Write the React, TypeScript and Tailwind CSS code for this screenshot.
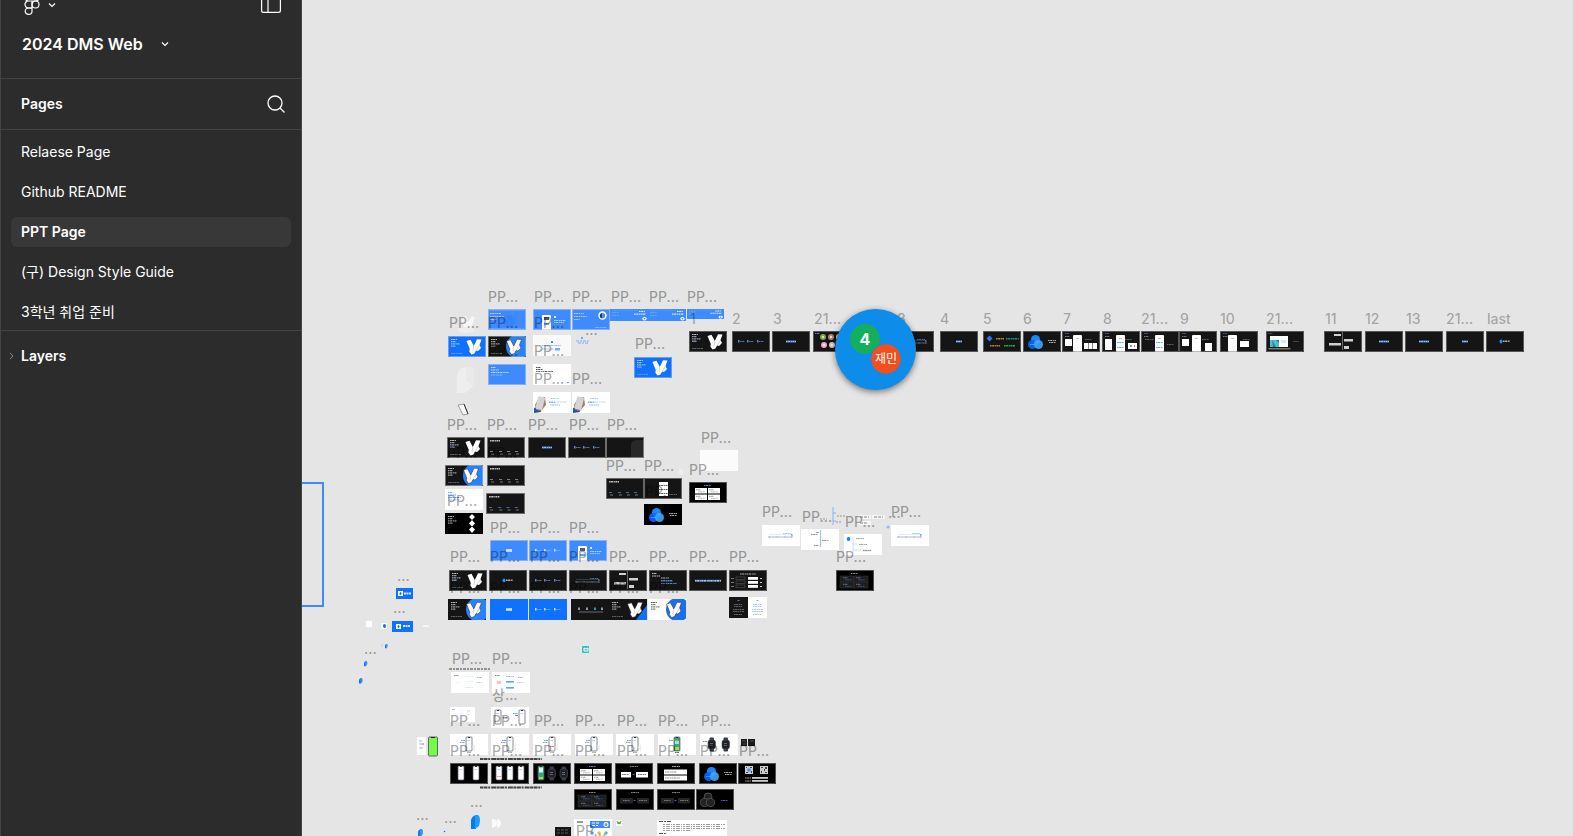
import React from "react";

type Kind =
  | "plain" | "logo" | "logoCircle" | "text" | "title" | "letters" | "phone" | "ring" | "corner" | "content"
  | "caption" | "hand" | "avatars" | "brands" | "trefoil" | "screens" | "laptop" | "branch" | "brand"
  | "fade" | "sheet" | "cards" | "pair" | "wide" | "diamonds" | "axis" | "vaxis" | "steps" | "notes"
  | "device" | "colorDevice" | "devices" | "watches" | "deviceWatches" | "outlineTrefoil" | "qr" | "split"
  | "twoPhones" | "board" | "dots" | "pills";

type Frame = { x: number; y: number; w?: number; h?: number; bg: string; kind: Kind; edge?: string; v?: number };
type Label = { x: number; y: number; text: string; light?: boolean };

const SKY = "#3d8bff";
const BLUE = "#1071ff";
const INK = "#151515";
const BLACK = "#000000";
const WHITE = "#ffffff";
const EDGE = "#8a8a8a";

const row = (y: number, xs: number[], bg: string, kinds: Kind[], edge?: string): Frame[] =>
  xs.map((x, i) => ({ x, y, bg, kind: kinds[i], edge, v: i }));

const frames: Frame[] = [
  ...row(309, [488, 533, 572], SKY, ["content", "phone", "ring"], "#c3cfe2"),
  { x: 610, y: 309, h: 12, bg: SKY, kind: "corner" },
  { x: 648, y: 309, h: 12, bg: SKY, kind: "corner" },
  { x: 687, y: 309, w: 37, h: 10, bg: SKY, kind: "corner" },
  { x: 448, y: 336, bg: BLUE, kind: "logo", edge: "#aebfdd" },
  { x: 488, y: 336, bg: INK, kind: "logoCircle", edge: "#aaaaaa" },
  { x: 533, y: 335, bg: "#f9f9f9", kind: "caption" },
  { x: 488, y: 364, bg: SKY, kind: "text", edge: "#c3cfe2" },
  { x: 533, y: 364, bg: WHITE, kind: "notes" },
  { x: 634, y: 357, bg: BLUE, kind: "logo", edge: "#aebfdd" },
  { x: 533, y: 392, bg: WHITE, kind: "hand" },
  { x: 572, y: 392, bg: WHITE, kind: "hand" },
  ...row(331, [689, 732, 772, 813, 854, 896, 940, 983, 1023, 1062, 1102, 1141, 1179, 1220, 1266, 1324, 1365, 1405, 1446, 1486], INK,
    ["logo", "letters", "title", "avatars", "title", "axis", "title", "brands", "trefoil", "screens", "screens", "screens", "screens", "screens", "laptop", "branch", "title", "title", "title", "brand"], EDGE),
  ...row(437, [447, 487, 528, 568, 606], INK, ["logo", "dots", "title", "letters", "fade"], "#b5b5b5"),
  ...row(465, [445, 487], INK, ["logoCircle", "dots"], "#b5b5b5"),
  { x: 445, y: 489, bg: WHITE, kind: "text", v: 1 },
  { x: 486, y: 493, w: 39, bg: INK, kind: "dots", edge: "#b5b5b5" },
  { x: 445, y: 513, bg: BLACK, kind: "diamonds" },
  ...row(478, [606, 644], INK, ["dots", "sheet"], "#a5a5a5"),
  { x: 700, y: 450, bg: "#fbfbfb", kind: "plain" },
  { x: 689, y: 482, bg: BLACK, kind: "cards", edge: EDGE },
  { x: 644, y: 504, bg: BLACK, kind: "trefoil" },
  ...row(540, [490, 529, 569], SKY, ["title", "letters", "phone"], "#c3cfe2"),
  ...row(570, [449, 489, 529, 569, 609, 649, 689, 729], INK, ["logo", "brand", "letters", "axis", "branch", "text", "wide", "pills"], EDGE),
  { x: 448, y: 599, bg: INK, kind: "logoCircle" },
  { x: 490, y: 599, bg: BLUE, kind: "title" },
  { x: 529, y: 599, bg: BLUE, kind: "letters" },
  { x: 571, y: 599, bg: INK, kind: "steps" },
  { x: 609, y: 599, bg: INK, kind: "logoCircle", v: 2 },
  { x: 648, y: 599, bg: WHITE, kind: "logoCircle", v: 1 },
  { x: 729, y: 597, bg: WHITE, kind: "split" },
  ...row(525, [762, 891], WHITE, ["axis", "axis"]),
  { x: 801, y: 529, bg: WHITE, kind: "vaxis" },
  { x: 844, y: 534, bg: WHITE, kind: "vaxis", v: 1 },
  { x: 836, y: 570, bg: BLACK, kind: "cards", v: 9, edge: EDGE },
  ...row(672, [451, 492], WHITE, ["board", "board"]),
  { x: 450, y: 707, w: 25, h: 15, bg: WHITE, kind: "board" },
  { x: 491, y: 707, bg: WHITE, kind: "twoPhones" },
  ...row(734, [450, 491, 533, 575, 616, 658, 700], WHITE, ["device", "device", "device", "device", "device", "colorDevice", "watches"]),
  ...row(763, [450, 491, 533, 574, 615, 657, 699, 738], BLACK, ["devices", "devices", "deviceWatches", "cards", "pair", "wide", "trefoil", "qr"], EDGE),
  ...row(789, [574, 616, 657, 696], BLACK, ["cards", "pair", "pair", "outlineTrefoil"], EDGE).map((f) => ({ ...f, v: 9 })),
];

const pp = (y: number, xs: number[]): Label[] => xs.map((x) => ({ x, y, text: "PP..." }));
const numbered: [number, string][] = [
  [690, "1"], [732, "2"], [773, "3"], [814, "21..."], [897, "3"], [940, "4"], [983, "5"], [1023, "6"], [1063, "7"],
  [1103, "8"], [1141, "21..."], [1180, "9"], [1220, "10"], [1266, "21..."], [1325, "11"], [1365, "12"], [1406, "13"],
  [1446, "21..."], [1487, "last"],
];
const labels: Label[] = [
  ...pp(296, [488, 534, 572, 611, 649, 687]),
  ...pp(322, [449, 488, 534]),
  ...pp(350, [488, 534]),
  ...pp(343, [635]),
  ...pp(378, [534, 572]),
  ...numbered.map(([x, text]) => ({ x, y: 318, text, light: true })),
  ...pp(424, [447, 487, 528, 569, 607]),
  ...pp(452, [447, 487]),
  ...pp(465, [606, 644]),
  ...pp(437, [701]),
  ...pp(469, [689]),
  ...pp(500, [447]),
  ...pp(491, [645]),
  ...pp(527, [490, 530, 569]),
  ...pp(556, [450, 490, 530, 569, 609, 649, 689, 729]),
  ...pp(587, [450, 490, 530, 569, 609, 649]),
  ...pp(511, [762, 891]),
  ...pp(516, [802]),
  ...pp(521, [845]),
  ...pp(556, [836]),
  ...pp(658, [452, 492]),
  { x: 492, y: 694, text: "상..." },
  ...pp(720, [450, 492, 534, 575, 617, 658, 701]),
  ...pp(750, [450, 492, 534, 575, 617, 658, 700, 739]),
  ...pp(830, [576]),
  ...[[585, 333], [397, 579], [393, 611], [364, 652], [470, 805], [416, 818], [444, 821], [888, 516]].map(([x, y]) => ({ x, y: y - 4, text: "..." })),
];

function Bar({ x, y, w, h = 1, c = "#d6d6d6", o = 0.8 }: { x: number; y: number; w: number; h?: number; c?: string; o?: number }) {
  const textLike = w >= 4 && h >= 1 && h <= 1.5;
  if (textLike) {
    return <path d={`M${x} ${y + h / 2}h${w}`} stroke={c} strokeWidth={h} strokeDasharray="1.6 .5 2.3 .7 1.1 .4" opacity={o} fill="none" />;
  }
  return <rect x={x} y={y} width={w} height={h} fill={c} opacity={o} />;
}

function Check({ dark }: { dark?: boolean }) {
  return (
    <g fill="#fff" stroke={dark ? "#262626" : "none"} strokeWidth=".5" strokeLinejoin="round">
      <path d="M18.500 5 22.500 3.800 25.800 10 29 3.200 33.500 3.500 31.500 9 33 12 30 15 28 14.500 26.500 17.500 23.500 18.500 21.300 15.500 21.800 13z" />
      <path d="m25.800 10-.8 5M31.500 9l-3 5" stroke="#999" strokeWidth=".4" />
    </g>
  );
}

function Para({ c = "#e8e8e8" }: { c?: string }) {
  return (
    <g>
      <Bar x={3} y={3} w={6} c={c} />
      <Bar x={3} y={5.2} w={5} c={c} />
      <Bar x={3} y={7.4} w={9} c={c} />
      <Bar x={3} y={9.6} w={5} c={c} />
    </g>
  );
}

function Trefoil() {
  return (
    <g>
      <circle cx="12.500" cy="8.500" r="4.500" fill="#1c86ff" />
      <circle cx="9.500" cy="13.500" r="4.500" fill="#0864ff" opacity=".92" />
      <circle cx="15.500" cy="13.500" r="4.500" fill="#46a8ff" opacity=".88" />
      <Bar x={7} y={13} w={4} c="#b5d6ff" o={0.5} />
      <Bar x={25} y={9} w={8} />
      <Bar x={26} y={11} w={7} />
    </g>
  );
}

function Watch({ x }: { x: number }) {
  return (
    <g>
      <rect x={x + 1.5} y="3.500" width="4.500" height="14" rx="1" fill="#353b4e" />
      <rect x={x} y="6" width="7.500" height="9" rx="2.200" fill="#202127" stroke="#4b5260" strokeWidth=".6" />
      <Bar x={x + 2} y={9} w={3} c="#777" />
      <Bar x={x + 2} y={11} w={3} c="#777" />
    </g>
  );
}

function Phone({ x, fill = "#fff" }: { x: number; fill?: string }) {
  return (
    <g>
      <rect x={x} y="3" width="6" height="14" rx="1" fill={fill} stroke="#555965" strokeWidth=".7" />
      <Bar x={x + 2} y={3.2} w={2} h={0.8} c="#111" o={1} />
      <Bar x={x + 1.2} y={6} w={3} c="#9bb3dd" o={0.6} />
    </g>
  );
}

function Art({ kind, bg, v = 0 }: { kind: Kind; bg: string; v?: number }) {
  const onWhite = bg === WHITE;
  switch (kind) {
    case "logo":
      return <g><Para /><Bar x={3} y={10} w={5} c="#5a9cff" /><Bar x={3} y={17} w={11} o={0.4} /><Check /></g>;
    case "logoCircle":
      return (
        <g>
          {v === 2 ? <path d="M38 6v15H27z" fill="#1071ff" /> : <circle cx="30" cy="10.500" r="12" fill={v === 1 ? "#196fec" : "#2683ff"} />}
          <Para c={onWhite ? "#333" : "#e8e8e8"} />
          {!onWhite && <Bar x={3} y={17} w={11} o={0.4} />}
          <Check dark />
        </g>
      );
    case "text":
      return <g><Bar x={3} y={3} w={5} c={onWhite ? SKY : "#eee"} /><Bar x={3} y={5.5} w={8} c={onWhite ? SKY : "#eee"} />{bg === INK ? <><Bar x={12} y={7.5} w={8} c="#ddd" /><Bar x={12} y={10} w={12} h={1.5} c="#6ca5ff" /><Bar x={12} y={13} w={16} c="#6ca5ff" /></> : <><Bar x={3} y={8} w={v ? 13 : 18} c={onWhite ? SKY : "#dbe8ff"} /><Bar x={3} y={10.5} w={12} c={onWhite ? SKY : "#dbe8ff"} o={0.5} /></>}</g>;
    case "content":
      return <g><Bar x={2} y={1} w={34} c="#9fc5ff" o={0.4} /><Bar x={2} y={4} w={11} /><Bar x={2} y={7} w={14} /><Bar x={2} y={10} w={7} /><circle cx="21" cy="12" r="6" fill="#2f7ef5" opacity=".5" /><Bar x={2} y={19} w={34} c="#9fc5ff" o={0.4} /></g>;
    case "notes":
      return <g><Bar x={3} y={3} w={5} c="#222" /><Bar x={3} y={5} w={7} c="#222" /><Bar x={3} y={7} w={17} c="#444" /><Bar x={34} y={18} w={2} c={SKY} /></g>;
    case "title":
      return <g><Bar x={v % 3 === 0 ? 16 : 14} y={9} w={v % 3 === 0 ? 6 : 10} h={3} c={bg === INK ? "#376fc4" : "#fff"} o={0.65} /><Bar x={v % 3 === 0 ? 16 : 14} y={10} w={v % 3 === 0 ? 6 : 10} c="#e7efff" o={0.7} /></g>;
    case "letters":
      return <g>{[6, 15, 25].map((x) => <g key={x}><Bar x={x} y={9} w={1.5} h={2.5} c={bg === INK ? "#77a8ff" : "#fff"} /><Bar x={x + 2} y={10} w={5} c="#aaccff" o={0.5} /></g>)}</g>;
    case "brand":
      return <g><ellipse cx="15" cy="10.500" rx="1.500" ry="2" fill="#258cff" /><Bar x={17} y={9.5} w={7} h={1.5} o={0.8} /></g>;
    case "phone":
      return <g><rect x="9" y="6" width="9" height="15" rx="1" fill="#fff" /><Bar x={11} y={8} w={5} h={3} c="#23344f" /><Bar x={11} y={14} w={5} h={2} c={SKY} /><Bar x={21} y={7} w={2} h={2} c="#fff" /><Bar x={21} y={11} w={12} c="#fff" o={0.6} /><Bar x={21} y={13} w={10} c="#fff" o={0.5} /></g>;
    case "ring":
      return <g><Bar x={2} y={4} w={10} /><Bar x={2} y={7} w={13} /><Bar x={2} y={10} w={6} /><circle cx="30.500" cy="6.500" r="4.200" fill="#fff" /><path d="M30.500 4a2.700 2.700 0 1 0 0 5.400z" fill="#18396d" /><path d="M30.500 4a2.700 2.700 0 0 1 0 5.400z" fill={SKY} /><Bar x={23} y={18} w={12} c="#cfe1ff" o={0.5} /></g>;
    case "corner":
      return <g><Bar x={2} y={1} w={34} c="#a9ccff" o={0.3} /><Bar x={2} y={4} w={7} o={0.4} /><Bar x={2} y={8} w={7} o={0.4} /><Bar x={29} y={2.5} w={6} h={1.5} c="#fff" /><Bar x={24} y={6} w={12} h={1.5} c="#fff" /><circle cx="34.500" cy="13" r="1.600" fill="none" stroke="#fff" strokeWidth="1.200" /></g>;
    case "caption":
      return <g><Bar x={18} y={6} w={2} h={2} c={BLUE} /><Bar x={9} y={10} w={19} c="#75aaff" /><Bar x={9} y={13.5} w={12} c="#75aaff" /><Bar x={22} y={13} w={5} h={2.5} c="#5299ff" /></g>;
    case "hand":
      return <g><path d="M1 16l5-2 2 6-7 1z" fill="#2352a8" /><path d="M2 13l4-7 6-1 1 8-5 6-5-1z" fill="#a87968" /><rect x="4" y="4.500" width="7" height="13" rx="1" fill="#d4d4d6" transform="rotate(14 7 10)" /><Bar x={18} y={6} w={8} c="#68a2ff" o={0.6} /><Bar x={16} y={9.5} w={6} h={1.5} c={SKY} o={0.7} /><Bar x={22} y={9.5} w={12} c={SKY} o={0.4} /><Bar x={17} y={12.5} w={10} c={SKY} o={0.6} /></g>;
    case "avatars":
      return <g>{[[10, 6, "#79a84d"], [18, 6, "#b08072"], [26, 6, "#e6c094"], [11, 14, "#f2a8c3"], [19, 14, "#d9c7bf"], [27, 14, "#a5c5d6"]].map(([cx, cy, c], i) => <g key={i}><circle cx={cx} cy={cy} r="3" fill={c as string} /><circle cx={cx} cy={cy} r="1.200" fill="#fff" opacity=".7" /></g>)}<Bar x={2} y={2} w={5} c="#5c9bff" /></g>;
    case "brands":
      return <g><path d="M6.500 4.500 9.500 7.500 6.500 10.500 3.500 7.500z" fill="#2279ff" /><Bar x={13} y={7} w={8} h={1.5} c="#e3b233" /><Bar x={23} y={7} w={13} h={1.5} c="#24b3ac" /><Bar x={7} y={14} w={10} h={1.5} c="#ff8e49" /><Bar x={21} y={14} w={11} h={1.5} c="#23d45c" /></g>;
    case "trefoil":
      return <Trefoil />;
    case "screens": {
      const tall = [11, 14, 14, 13, 8][v - 9];
      return (
        <g>
          <Bar x={3} y={2} w={4} c="#3e6daa" /><Bar x={3} y={5} w={5} o={0.5} />
          {v !== 11 && v !== 13 && <rect x="3" y="8" width="7" height={v === 10 ? 11 : 7} fill="#fff" />}
          <rect x={tall} y="4" width="9" height="17" rx="1" fill="#fff" />
          {(v === 10 || v === 11) && <><Bar x={tall + 1} y={11} w={7} c={SKY} /><Bar x={tall + 1} y={16} w={7} c={SKY} /></>}
          {v === 9 && <><rect x="22" y="12" width="4" height="6" fill="#fff" /><rect x="26.500" y="12" width="4" height="6" fill="#fff" /><rect x="31" y="12" width="4" height="6" fill="#fff" /></>}
          {v === 10 && <><rect x="26" y="12" width="9" height="6" fill="#fff" /><Bar x={28} y={14} w={2} h={2} c={SKY} /><Bar x={32} y={14} w={1} h={2} c="#ff3333" /></>}
          {v === 11 && <><Bar x={4} y={8} w={9} o={0.4} /><Bar x={26} y={13} w={7} o={0.4} /></>}
          {v === 12 && <rect x="26" y="12" width="7" height="8" fill="#fff" />}
          {v === 13 && <rect x="20" y="10" width="9" height="6" fill="#fff" />}
          {v !== 11 && <Bar x={23} y={8} w={7} o={0.4} />}
          <Bar x={tall + 3} y={7} w={3} c="#888" o={0.5} />
        </g>
      );
    }
    case "laptop":
      return <g><Bar x={2} y={2} w={5} c="#366092" /><rect x="4" y="5" width="18" height="11" fill="#fff" /><path d="M4 9h9v7H4z" fill="#4dc0cd" /><path d="M6 9l4 7H7zM10 9h3v3z" fill="#267f9d" /><path d="M15 9h5v3h-5z" fill="#cfeaff" /><path d="M2 17h23l-1 1.500H3z" fill="#777" /><Bar x={27} y={10} w={6} o={0.3} /></g>;
    case "branch":
      return <g><Bar x={18} y={1} w={0.7} h={18} c="#aaa" /><Bar x={10} y={3} w={7} h={2} c="#fff" /><Bar x={20} y={8} w={9} h={2.5} c="#fff" /><Bar x={5} y={12} w={12} h={2.5} c="#fff" /><Bar x={20} y={15} w={5} h={3} c="#fff" /></g>;
    case "dots":
      return <g><Bar x={3} y={3} w={10} h={1.5} c="#eee" />{[3, 12, 20, 28].map((x) => <g key={x}><Bar x={x} y={14} w={3} c={v ? "#aaa" : "#5592e5"} o={0.7} /><Bar x={x + 1} y={16.5} w={3} o={0.5} /></g>)}</g>;
    case "fade":
      return <path d="M25 21V8c0-3 3-5 7-5h6v18z" fill="#282828" />;
    case "sheet":
      return <g><rect x="15" y="4" width="9" height="14" fill="#fff" />{[7, 11, 15].map((y) => <Bar key={y} x={15} y={y} w={9} c="#333" />)}<Bar x={25} y={16} w={8} o={0.4} /></g>;
    case "cards": {
      const dark = v === 9;
      return <g><Bar x={15} y={3} w={7} c={dark ? "#aaa" : "#82aaf2"} />{[[7, 6], [20, 6], [7, 12.5], [20, 12.5]].map(([x, y]) => <g key={`${x}-${y}`}><rect x={dark ? x - 3 + (x > 10 ? 1 : 0) : x - 1} y={y} width={dark ? 14 : 12} height="5.500" fill={dark ? "#1d1d1d" : "#fff"} stroke={dark ? "#383838" : "none"} strokeWidth=".5" /><Bar x={x} y={y + 1.3} w={5} c={dark ? "#aaa" : "#555"} o={0.6} /><Bar x={x + 2} y={y + 3.3} w={7} c={dark ? "#397de5" : "#888"} o={0.6} /></g>)}</g>;
    }
    case "pair": {
      const dark = v === 9;
      return <g><Bar x={15} y={3} w={8} o={0.6} /><rect x={dark ? 4 : 6} y="9" width={dark ? 13 : 10} height="5.500" fill={dark ? "#242424" : "#fff"} /><rect x="21" y="9" width="12" height="5.500" fill={dark ? "#242424" : "#fff"} /><Bar x={7} y={11} w={7} c={dark ? "#888" : "#555"} /><Bar x={23} y={11} w={8} c={dark ? "#888" : "#555"} /><Bar x={17.5} y={11} w={2} c={SKY} /></g>;
    }
    case "wide":
      return bg === INK ? <g><Bar x={6} y={9.5} w={26} h={2.5} c="#3e79cf" o={0.5} /><Bar x={6} y={10} w={26} h={1.5} c="#d6e5ff" o={0.8} /></g> : <g><Bar x={15} y={3} w={8} /><rect x="7" y="6.500" width="23" height="5" fill="#fff" /><rect x="7" y="12.500" width="23" height="5" fill="#fff" /><Bar x={8} y={8.5} w={12} c="#777" /><Bar x={8} y={14.5} w={15} c="#777" /></g>;
    case "pills":
      return <g><Bar x={11} y={3.5} w={16} c="#ddd" />{[7, 11, 15].map((y) => <g key={y}><rect x="7" y={y} width="9" height="2.500" fill="#111" stroke="#666" strokeWidth=".5" /><rect x="19" y={y} width="10" height="2.800" fill="#fff" /><Bar x={31} y={y + 1} w={2} c="#fff" /><Bar x={2} y={y + 1} w={3} o={0.5} /></g>)}</g>;
    case "diamonds":
      return <g><Para /><path d="M27 1l3 3-3 3 3 3.500-3 3 3 3-3 3.500-3-3.500 3-3-3-3 3-3.500-3-3z" fill="#fff" /></g>;
    case "axis": {
      const line = onWhite ? "#888" : "#999";
      return <g><path d="M7 12h23M7 11v2M15 11.500v1M23 11.500v1M30 10v3" stroke={line} strokeWidth=".6" fill="none" /><Bar x={7} y={9.5} w={23} h={0.4} c="#7aadff" o={0.6} /><Bar x={21} y={8} w={8} c="#6da4f5" o={0.6} /><Bar x={29} y={9} w={1.5} h={1.5} c={SKY} /></g>;
    }
    case "vaxis":
      return v ? <g><ellipse cx="4.500" cy="5" rx="1.800" ry="2" fill="#1683ff" /><path d="M9 3v16M9 10h4M9 16h8" stroke="#a9caff" strokeWidth=".6" fill="none" /><Bar x={12} y={4} w={8} c="#777" o={0.7} /><Bar x={15} y={10} w={8} c="#777" o={0.7} /><Bar x={19} y={15} w={8} h={3} c="#e5e5e5" o={0.6} /><Bar x={19} y={16} w={8} c="#777" /></g> : <g><Bar x={19} y={1} w={0.8} h={17} c="#5c9dff" /><Bar x={10} y={5} w={7} c="#777" /><Bar x={15} y={3} w={3} c={SKY} /><Bar x={21} y={11} w={7} c="#777" /><Bar x={13} y={16} w={5} c="#777" /></g>;
    case "steps":
      return <g><path d="M8 13h24" stroke="#aaa" strokeWidth=".6" />{[7, 15, 23, 30].map((x, i) => <Bar key={x} x={x} y={8.5} w={2} h={2.5} c={i === 2 ? "#26bbc5" : "#aebbd0"} />)}</g>;
    case "split":
      return <g><rect width="19" height="21" fill={INK} />{[0, 19].map((x) => <g key={x}><Bar x={x + 8.5} y={3} w={2} c="#5f9cff" />{[7, 9, 12, 14, 17].map((y) => <Bar key={y} x={x + (y % 2 ? 5 : 4)} y={y} w={y % 2 ? 8 : 11} c={x ? "#6e9ee8" : "#999"} o={0.6} />)}</g>)}</g>;
    case "device":
      return <g><Phone x={16} /><Bar x={11} y={6} w={4} c={SKY} /><Bar x={10} y={8} w={5} c="#666" o={0.6} /><Bar x={17} y={18} w={4} c="#999" />{v === 2 && <Bar x={17} y={12} w={4} c="#f44" />}<path d="M22 13l3-3v8z" fill="#eee" /></g>;
    case "colorDevice":
      return <g><Phone x={16} fill="#36a978" /><Bar x={17} y={7} w={4} h={3} c="#c6ebff" /><Bar x={17} y={13} w={4} h={3} c="#ead936" /><Bar x={11} y={6} w={4} c={SKY} /><Bar x={17} y={18} w={4} c="#444" /></g>;
    case "devices":
      return v === 0 ? <g><Phone x={8} /><Phone x={23} /></g> : <g><Phone x={5} /><Phone x={16} /><Phone x={27} /><Bar x={6} y={13} w={4} c="#f66" /></g>;
    case "watches":
      return <g><Bar x={3} y={7} w={4} c="#777" /><Watch x={8} /><Watch x={22} /></g>;
    case "deviceWatches":
      return <g><Phone x={5} fill="#36a978" /><Bar x={6} y={4.5} w={4} h={5} c="#d6f0ff" o={1} /><Bar x={6} y={14} w={4} h={2} c="#ead936" /><Watch x={15} /><Watch x={27} /></g>;
    case "outlineTrefoil":
      return <g fill="#222" stroke="#6d6d6d" strokeWidth=".6"><circle cx="12" cy="8" r="4" /><circle cx="8.500" cy="13.500" r="4.200" /><circle cx="14.500" cy="13.500" r="4.200" /><Bar x={25} y={11} w={7} c={SKY} /></g>;
    case "qr":
      return <g><rect x="7" y="3" width="8" height="8" fill="#ccc" /><rect x="22" y="3" width="8" height="8" fill="#ccc" /><path d="M8 4h1v1H8zM12 4h2v1h-2zM8 9h2v1H8zM13 8h1v2h-1zM23 4h2v1h-2zM27 4h2v2h-2zM23 8h1v2h-1zM26 6h1v2h-1zM27 9h2v1h-2z" fill="#444" /><Bar x={9.5} y={5.5} w={3} h={3} c={SKY} o={1} /><Bar x={7} y={14.5} w={6} /><Bar x={14} y={14} w={16} h={1.8} c="#fff" /><Bar x={7} y={17.5} w={6} /><Bar x={14} y={17} w={16} h={1.8} c="#fff" /></g>;
    case "twoPhones":
      return <g><Phone x={4} /><Phone x={28} /><Bar x={12} y={10} w={5} h={1.5} c="#555" /><Bar x={22} y={6} w={5} c={SKY} /><Bar x={24} y={8} w={3} c="#666" /></g>;
    case "board":
      return <g><Bar x={3} y={3} w={5} c="#777" /><Bar x={14} y={4} w={8} c={v ? "#7eaefb" : "#dce8ff"} /><Bar x={14} y={9} w={8} h={v ? 1.6 : 1} c={v ? SKY : "#dfe9fb"} /><Bar x={26} y={5} w={5} c="#777" o={0.6} /><Bar x={25} y={10} w={7} c="#9aaac4" o={0.5} /><Bar x={14} y={15} w={8} h={v ? 1.6 : 1} c={v ? SKY : "#c9dcff"} /><Bar x={5} y={9} w={4} h={3} c={v ? "#ffb2b2" : "#f3f6ff"} /></g>;
    default:
      return null;
  }
}

function CanvasFrame({ frame }: { frame: Frame }) {
  const { x, y, w = 38, h = 21, bg, kind, edge, v } = frame;
  return (
    <svg className="absolute" style={{ left: x, top: y }} width={w} height={h} viewBox={kind === "corner" ? "0 0 38 16" : "0 0 38 21"} preserveAspectRatio="none">
      <rect width="38" height="21" fill={bg} />
      <Art kind={kind} bg={bg} v={v} />
      {edge && <rect x=".5" y=".5" width="37" height="20" fill="none" stroke={edge} strokeWidth=".8" opacity=".7" />}
    </svg>
  );
}

function Leaf() {
  return <><path d="M0 5Q1 1 5 0v14H0z" fill="#0878ff" /><path d="M4 0h3q2 1 2 6l-1 5-4 3z" fill="#1f9bff" /></>;
}

function LooseShapes() {
  return (
    <svg className="absolute inset-0" width="1573" height="836" aria-hidden="true">
      <path d="M457 393v-17q1-9 9-9h8v8l-2 12-7 6z" fill="#eeeeee" /><path d="M466 367v14l8 6v-20z" fill="#e9e9e9" />
      <path d="m461 318 5-2 2 6 4-6 3 2-5 12-4 3z" fill="#f6f6f6" /><ellipse cx="466" cy="330" rx="8" ry="3" fill="#eee" />
      <path d="m458 405 6-1 4 10-5 1z" fill="#f7f7f7" stroke="#777" strokeWidth=".7" /><path d="m464 404 4 10" stroke="#333" />
      <path d="M576 341h13M578 343h10" stroke="#78aaff" strokeDasharray="3 1 2 1" /><circle cx="582" cy="338" r="1" fill={SKY} />
      <path d="M833 507v18M833 513h3M833 521h3" stroke="#82b2ff" fill="none" /><path d="M837 516h8M836 522h6M820 519h7" stroke="#999" strokeDasharray="2 1" />
      <path d="M858 515h13v4h-13zM872 515h13v4h-13zM858 521h13v4h-13z" fill="#f6f6f6" /><path d="M860 517h9M874 517h9M860 523h8" stroke="#888" strokeDasharray="3 1" />
      <circle cx="888" cy="527" r="1.500" fill="#8ab8f5" />
      <path d="M396 588h17v11h-17z" fill={BLUE} /><path d="M398 591h5v5h-5z" fill="#fff" /><ellipse cx="400.500" cy="593.500" rx="1" ry="1.500" fill={BLUE} /><path d="M404 593.500h7" stroke="#dbe9ff" strokeWidth="2" strokeDasharray="2 .5" />
      <path d="M366 621h6v6h-6zM381 623h6v6h-6z" fill="#fff" /><ellipse cx="384.500" cy="626" rx="1.500" ry="2" fill={BLUE} />
      <path d="M392 621h21v11h-21z" fill={BLUE} /><path d="M396 624h5v5h-5z" fill="#fff" /><ellipse cx="398.500" cy="626.500" rx="1" ry="1.500" fill={BLUE} /><path d="M403 626h7" stroke="#dbe9ff" strokeWidth="2" strokeDasharray="2 .5" /><path d="M423 625h6v2h-6z" fill="#f6f6f6" />
      <g transform="translate(385 644) scale(.3)"><Leaf /></g><path d="M381 644h2v3h-2z" fill="#ccdaf0" />
      <g transform="translate(364 661) scale(.37)"><Leaf /></g><g transform="translate(359 678) scale(.4)"><Leaf /></g>
      <rect x="582" y="646" width="7" height="7" rx="1" fill="#2fc2c5" /><path d="M584 651v-3l2 1 2-1v3z" fill="none" stroke="#fff" />
      <path d="M449 669h41" stroke="#777" strokeWidth="1.500" strokeDasharray="3 1 2 1" />
      <path d="M480 759h62M480 787.500h62" stroke="#444" strokeWidth="2" strokeDasharray="3 .5 4 .7 2 1 5 .5" />
      <path d="M417 737h9v18h-9z" fill="#fff" /><path d="M419 741h3M419 744h5M419 748h4" stroke="#8eb7ff" /><path d="M422 744h2" stroke="#f77" />
      <rect x="428.500" y="737" width="9" height="19" rx="1" fill="#73fb4c" stroke="#666" /><path d="M431 737.500h4" stroke="#222" strokeWidth="1" />
      <g transform="translate(471 815)"><Leaf /></g><g transform="translate(418 829)scale(.55)"><Leaf /></g><circle cx="444.500" cy="831.500" r=".8" fill={BLUE} />
      <path d="M492 819q5 0 5 4t-5 5zM497 819q4 0 4 4t-4 5z" fill="#fafafa" />
      <path d="M741 739h6v7h-6zM748 739h7v7h-7z" fill="#1b1b1b" /><path d="M742 741h4M750 741h4M743 744h3" stroke="#777" strokeWidth=".6" />
      <path d="M555 827h16v9h-16z" fill="#151515" /><path d="M557 830h12M557 833h12" stroke="#555" strokeDasharray="3 1" />
      <path d="M574 819h38v17h-38z" fill="#fff" /><path d="M590 821h20v7h-20z" fill={SKY} /><path d="M592 823h8M592 825.500h6" stroke="#fff" strokeDasharray="3 1" /><circle cx="606" cy="824.500" r="2.500" fill="#fff" /><circle cx="606" cy="824.500" r="1.500" fill="#77b943" /><circle cx="592" cy="833" r="1.800" fill="#3d9aff" /><circle cx="599" cy="833" r="1.800" fill="#f4bc27" /><circle cx="606" cy="833" r="1.800" fill="#60c38d" /><path d="M577 822h6" stroke="#333" />
      <path d="M616 820h6v6h-6z" fill="#fff" /><path d="m616.500 821 2.500 1 2.500-1-1 3h-3z" fill="#50af44" />
      <path d="M657 820h70v16h-70z" fill="#fff" /><path d="M659 821.500h12M659 833.500h8" stroke="#555" strokeDasharray="4 1 2 1" /><path d="M663 824.500h62M663 826.500h58M663 828.500h63M663 830.500h28" stroke="#888" strokeWidth=".8" strokeDasharray="2 1 4 1 1 1" />
      <path d="M450 431h24M660 473h6M679 469h4v5h-4z" stroke="#ededed" fill="#ededed" strokeDasharray="2 1" />
    </svg>
  );
}

const pages = ["Relaese Page", "Github README", "PPT Page", "(구) Design Style Guide", "3학년 취업 준비"];

function Chevron({ className }: { className?: string }) {
  return (
    <svg className={className} width="8" height="6" viewBox="0 0 8 6" fill="none" stroke="currentColor" aria-hidden="true">
      <path d="M1 1.500 4 4.500 7 1.500" strokeWidth="1.200" />
    </svg>
  );
}

function Sidebar() {
  return (
    <aside className="z-10 flex w-[302px] shrink-0 flex-col border-x border-[#444444] bg-[#2c2c2c] text-white">
      <header className="flex h-[79px] flex-col justify-between border-b border-[#444444] pr-5 pb-[21px] pl-[21px]">
        <div className="flex items-start justify-between">
          <button type="button" aria-label="Main menu" className="flex items-start gap-2 pl-[2px]">
            <svg width="16" height="16" viewBox="0 0 16 16" fill="none" stroke="currentColor" strokeWidth="1.200" aria-hidden="true">
              <path d="M8 1H4.500a3.500 3.500 0 0 1 0-7H8M8 1V8M8 1h3.500a3.500 3.500 0 0 0 0-7H8M8 8H4.500a3.500 3.500 0 0 1 0-7H8" />
              <circle cx="11.500" cy="4.500" r="3.500" />
              <path d="M8 8v3.200A3.400 3.200 0 1 1 4.600 8H8z" />
            </svg>
            <Chevron className="mt-[2px]" />
          </button>
          <button type="button" aria-label="Toggle sidebar">
            <svg width="20" height="13" viewBox="0 0 20 13" fill="none" stroke="currentColor" strokeWidth="1.200" aria-hidden="true">
              <path d="M.6-4V10.500q0 1.900 1.900 1.900h15q1.900 0 1.900-1.900V-4M7 0v12" />
            </svg>
          </button>
        </div>
        <button type="button" className="flex items-center gap-[18px] self-start text-[16px] leading-[26px] font-semibold">
          2024 DMS Web
          <Chevron />
        </button>
      </header>
      <div className="flex h-[51px] items-center justify-between border-b border-[#444444] pr-4 pl-5">
        <h2 className="text-sm font-semibold">Pages</h2>
        <button type="button" aria-label="Search">
          <svg width="18" height="18" viewBox="0 0 18 18" fill="none" stroke="currentColor" strokeWidth="1.300" aria-hidden="true">
            <circle cx="8" cy="8" r="7" />
            <path d="m13 13 4.500 4.500" />
          </svg>
        </button>
      </div>
      <nav className="flex flex-col gap-[10px] border-b border-[#444444] px-[10px] pt-[7px] pb-[3px]">
        {pages.map((page) => (
          <button
            key={page}
            type="button"
            className={page === "PPT Page" ? "h-[30px] rounded-md bg-[#383838] px-[10px] text-left text-sm font-semibold" : "h-[30px] rounded-md px-[10px] text-left text-sm"}
          >
            {page}
          </button>
        ))}
      </nav>
      <button type="button" className="flex h-[50px] items-center gap-[7px] pl-2 text-sm font-semibold">
        <svg width="5" height="8" viewBox="0 0 5 8" fill="none" stroke="#8a8a8a" aria-hidden="true"><path d="m1 1 3 3-3 3" /></svg>
        Layers
      </button>
    </aside>
  );
}

export default function App() {
  return (
    <div className="relative flex h-screen overflow-hidden bg-[#e5e5e5] font-['Inter','Noto_Sans_CJK_KR',sans-serif]">
      <Sidebar />
      <main className="flex-1" aria-label="Canvas">
        <div className="absolute top-[482px] left-[290px] h-[125px] w-[34px] border-2 border-[#3d8bff]" />
        <LooseShapes />
        {frames.map((frame, i) => <CanvasFrame key={i} frame={frame} />)}
        {labels.map(({ x, y, text, light }, i) => (
          <span
            key={i}
            className={light ? "absolute text-sm leading-5 font-medium whitespace-nowrap text-black/30" : "absolute text-sm leading-5 font-medium whitespace-nowrap text-black/35"}
            style={{ left: x, top: y - 9 }}
          >
            {text}
          </span>
        ))}
        <div className="absolute top-[309px] left-[835px] size-[81px] rounded-full bg-[#0d8ce9] shadow-[0_2px_6px_rgba(0,0,0,0.5)]">
          <span className="absolute top-[15px] left-[15px] flex size-[30px] items-center justify-center rounded-full bg-[#14ae5c] text-[16px] font-bold text-white">4</span>
          <span className="absolute top-[35px] left-[36px] flex size-[30px] items-center justify-center rounded-full bg-[#f24e1e] text-xs text-white outline outline-[#0d8ce9]">재민</span>
        </div>
      </main>
    </div>
  );
}
